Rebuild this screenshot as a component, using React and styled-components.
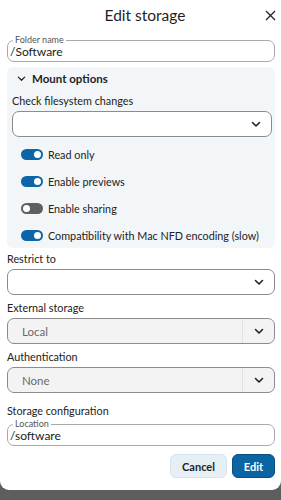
import React from "react";
import styled, { createGlobalStyle } from "styled-components";

const Global = createGlobalStyle`
  html, body { margin: 0; padding: 0; }
  body {
    background: #5e5e5e;
    font-family: Lato, "Noto Sans", sans-serif;
    color: #222;
    width: 281px;
    height: 500px;
    overflow: hidden;
  }
`;

const Dialog = styled.div`
  background: #fff;
  height: 490px;
  border-radius: 0 0 9px 9px;
  box-sizing: border-box;
  padding: 0 6px 0 7px;
  display: flex;
  flex-direction: column;
`;

const Header = styled.div`
  height: 30px;
  display: flex;
  align-items: center;
  justify-content: center;
  position: relative;
  padding-left: 8px;
`;

const Title = styled.h2`
  margin: 0;
  font-size: 15.5px;
  font-weight: 400;
  color: #1f1f1f;
`;

const Close = styled.button`
  position: absolute;
  right: -3px;
  top: 7px;
  border: 0;
  background: none;
  padding: 0;
  width: 16px;
  height: 16px;
  display: flex;
  align-items: center;
  justify-content: center;
`;

const Fieldset = styled.fieldset`
  margin: ${(p) => p.$mt || 0}px 0 0 0;
  padding: 1px 6px 0 2px;
  border: 1px solid #a9a9a9;
  border-radius: 7px;
  height: 26px;
  box-sizing: border-box;
  min-width: 0;
`;

const Legend = styled.legend`
  font-size: 9px;
  color: #555;
  padding: 0 2px;
  margin-left: 3px;
  line-height: 8px;
`;

const FieldValue = styled.div`
  font-size: 12px;
  color: #222;
  line-height: 13px;
`;

const Panel = styled.div`
  margin-top: 5px;
  background: #f3f6f9;
  border-radius: 6px;
  padding: 0 3px 7px 5px;
  display: flex;
  flex-direction: column;
`;

const PanelHeader = styled.div`
  height: 22px;
  display: flex;
  align-items: center;
  gap: 6px;
  padding-left: 5px;
  font-weight: 700;
  font-size: 11.5px;
  color: #1f1f1f;
`;

const Label = styled.div`
  font-size: 10.8px;
  color: #222;
  line-height: 16px;
  margin-top: ${(p) => p.$mt || 0}px;
`;

const Select = styled.div`
  height: 26px;
  box-sizing: border-box;
  border: 1px solid #8c8c8c;
  border-radius: 7px;
  background: ${(p) => (p.$disabled ? "#f3f3f3" : "#fff")};
  display: flex;
  align-items: stretch;
  margin-top: ${(p) => p.$mt || 0}px;
`;

const SelectValue = styled.div`
  flex: 1;
  display: flex;
  align-items: center;
  padding-left: 14px;
  font-size: 11.5px;
  color: #6a6a6a;
`;

const Caret = styled.div`
  width: 31px;
  display: flex;
  align-items: center;
  justify-content: center;
  border-left: ${(p) => (p.$divider ? "1px solid #e2e2e2" : "0")};
`;

const Toggles = styled.div`
  display: flex;
  flex-direction: column;
  gap: 16px;
  margin-top: 12px;
  padding-left: 9px;
`;

const ToggleRow = styled.label`
  display: flex;
  align-items: center;
  gap: 5px;
  font-size: 10.8px;
  color: #222;
  height: 11px;
  white-space: nowrap;
`;

const Track = styled.span`
  width: 22px;
  height: 11px;
  border-radius: 6px;
  background: ${(p) => (p.$on ? "#0b65a6" : "#5f5f5f")};
  position: relative;
  flex: none;
`;

const Knob = styled.span`
  position: absolute;
  top: 2px;
  left: ${(p) => (p.$on ? "13px" : "2px")};
  width: 7px;
  height: 7px;
  border-radius: 50%;
  background: #fff;
`;

const Footer = styled.div`
  display: flex;
  justify-content: flex-end;
  gap: 5px;
  margin-top: 8px;
`;

const Button = styled.button`
  height: 24px;
  border-radius: 6px;
  font-family: inherit;
  font-weight: 700;
  font-size: 11px;
  padding: 0;
  width: ${(p) => p.$w}px;
  border: ${(p) => (p.$primary ? "1px solid #0a4f80" : "1px solid #d6e4ee")};
  background: ${(p) => (p.$primary ? "#0a65a2" : "#e6eff5")};
  color: ${(p) => (p.$primary ? "#fff" : "#1f1f1f")};
`;

const Chevron = ({ size = 10, w = 1.6 }) => (
  <svg width={size} height={size} viewBox="0 0 10 10">
    <path d="M1.5 3.5 L5 7 L8.5 3.5" fill="none" stroke="#222" strokeWidth={w} strokeLinecap="round" strokeLinejoin="round" />
  </svg>
);

const Toggle = ({ on, children }) => (
  <ToggleRow>
    <Track $on={on}>
      <Knob $on={on} />
    </Track>
    {children}
  </ToggleRow>
);

export default function App() {
  return (
    <>
      <Global />
      <Dialog>
        <Header>
          <Title>Edit storage</Title>
          <Close aria-label="Close">
            <svg width="11" height="11" viewBox="0 0 11 11">
              <path d="M1 1 L10 10 M10 1 L1 10" stroke="#222" strokeWidth="1.3" />
            </svg>
          </Close>
        </Header>
        <Fieldset $mt={6}>
          <Legend>Folder name</Legend>
          <FieldValue>/Software</FieldValue>
        </Fieldset>
        <Panel>
          <PanelHeader>
            <Chevron size={9} w={1.4} />
            Mount options
          </PanelHeader>
          <Label $mt={4}>Check filesystem changes</Label>
          <Select $mt={2}>
            <SelectValue />
            <Caret>
              <Chevron />
            </Caret>
          </Select>
          <Toggles>
            <Toggle on>Read only</Toggle>
            <Toggle on>Enable previews</Toggle>
            <Toggle>Enable sharing</Toggle>
            <Toggle on>Compatibility with Mac NFD encoding (slow)</Toggle>
          </Toggles>
        </Panel>
        <Label $mt={3}>Restrict to</Label>
        <Select $mt={2}>
          <SelectValue />
          <Caret>
            <Chevron />
          </Caret>
        </Select>
        <Label $mt={5}>External storage</Label>
        <Select $mt={2} $disabled>
          <SelectValue>Local</SelectValue>
          <Caret $divider>
            <Chevron />
          </Caret>
        </Select>
        <Label $mt={5}>Authentication</Label>
        <Select $mt={2} $disabled>
          <SelectValue>None</SelectValue>
          <Caret $divider>
            <Chevron />
          </Caret>
        </Select>
        <Label $mt={10}>Storage configuration</Label>
        <Fieldset $mt={1}>
          <Legend>Location</Legend>
          <FieldValue>/software</FieldValue>
        </Fieldset>
        <Footer>
          <Button $w={57}>Cancel</Button>
          <Button $w={43} $primary>Edit</Button>
        </Footer>
      </Dialog>
    </>
  );
}
